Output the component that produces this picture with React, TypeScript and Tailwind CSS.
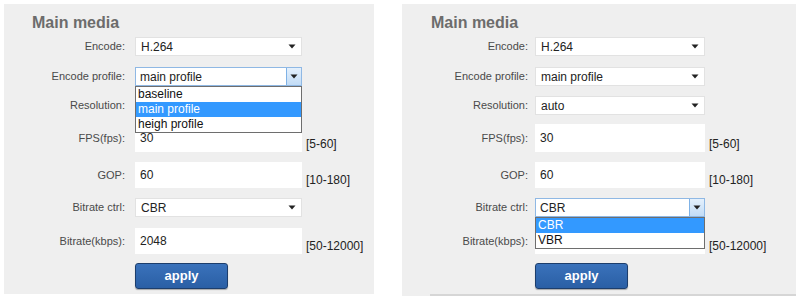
import type { ReactNode } from "react"

type PanelProps = {
  labelW: number
  gap: number
  fieldW: number
  titlePl: string
  openAt: "profile" | "bitrate"
  resolution: string
  bottomLine?: boolean
  className: string
}

const font = { fontFamily: '"Liberation Sans", Arial, sans-serif' }

function Arrow() {
  return (
    <svg width="8" height="5" viewBox="0 0 8 5" aria-hidden="true">
      <path d="M0.5 0.5 H7.5 L4 4.5 Z" fill="#222" />
    </svg>
  )
}

function Select({ value, open, options }: { value: string; open?: boolean; options?: string[] }) {
  return (
    <div className="relative h-full w-full">
      <div
        className={
          open
            ? "flex h-full w-full items-center border border-[#8fb8e4] bg-white pl-[4px] text-[12px] text-[#222]"
            : "flex h-full w-full items-center border border-[#e2e2e2] bg-white pl-[5px] text-[12px] text-[#222]"
        }
      >
        <span className="flex-1">{value}</span>
        {open ? (
          <span className="flex h-full w-[15px] items-center justify-center border-l border-[#7fb2e6] bg-[linear-gradient(#e4f0fc,#c2dcf6)]">
            <Arrow />
          </span>
        ) : (
          <span className="mr-[5px] flex items-center">
            <Arrow />
          </span>
        )}
      </div>
      {open && options && (
        <ul className="absolute left-0 top-full z-10 w-full border border-[#6e6e6e] bg-white text-[12px] leading-[15px] text-[#111]">
          {options.map((o) => (
            <li
              key={o}
              className={o === value ? "bg-[#3399ff] pl-[2px] text-white" : "pl-[2px]"}
            >
              {o}
            </li>
          ))}
        </ul>
      )}
    </div>
  )
}

function Row({
  label,
  labelW,
  gap,
  fieldW,
  h,
  mt,
  hint,
  children,
}: {
  label: string
  labelW: number
  gap: number
  fieldW: number
  h: number
  mt: number
  hint?: string
  children: ReactNode
}) {
  return (
    <div className="flex" style={{ marginTop: mt, height: h }}>
      <div
        className="flex shrink-0 items-center justify-end text-[11px] text-[#4a4a4a]"
        style={{ width: labelW, marginRight: gap }}
      >
        {label}
      </div>
      <div className="shrink-0" style={{ width: fieldW }}>
        {children}
      </div>
      {hint && (
        <div className="mb-[1px] ml-[4px] self-end text-[12px] leading-[14px] text-[#222]">{hint}</div>
      )}
    </div>
  )
}

function Input({ value }: { value: string }) {
  return (
    <div className="flex h-full w-full items-center bg-white pl-[5px] text-[12px] text-[#222]">{value}</div>
  )
}

function Panel({ labelW, gap, fieldW, titlePl, openAt, resolution, bottomLine, className }: PanelProps) {
  const r = { labelW, gap, fieldW }
  return (
    <div className={`flex flex-col bg-[#efefef] pt-[10px] ${className}`}>
      <h2 className={`h-[18px] text-[16px] font-bold leading-[18px] text-[#6c6c6c] ${titlePl}`}>Main media</h2>
      <Row {...r} label="Encode:" h={19} mt={5}>
        <Select value="H.264" />
      </Row>
      <Row {...r} label="Encode profile:" h={19} mt={11}>
        <Select
          value="main profile"
          open={openAt === "profile"}
          options={["baseline", "main profile", "heigh profile"]}
        />
      </Row>
      <Row {...r} label="Resolution:" h={19} mt={10}>
        <Select value={resolution} />
      </Row>
      <Row {...r} label="FPS(fps):" h={28} mt={9} hint="[5-60]">
        <Input value="30" />
      </Row>
      <Row {...r} label="GOP:" h={26} mt={10} hint="[10-180]">
        <Input value="60" />
      </Row>
      <Row {...r} label="Bitrate ctrl:" h={19} mt={10}>
        <Select value="CBR" open={openAt === "bitrate"} options={["CBR", "VBR"]} />
      </Row>
      <Row {...r} label="Bitrate(kbps):" h={26} mt={11} hint="[50-12000]">
        <Input value="2048" />
      </Row>
      <div className="mt-[9px] flex" style={{ paddingLeft: labelW + gap }}>
        <button className="h-[26px] w-[93px] rounded-[3px] border border-[#1d3e6c] bg-[linear-gradient(#3a72bb,#2a5fa5)] text-[13px] font-bold text-white shadow-[0_1px_1px_rgba(0,0,0,0.3)]">
          apply
        </button>
      </div>
      <div className="h-[5px]" />
      {bottomLine && <div className="ml-[28px] h-[2px] bg-[#d6d6d6]" />}
    </div>
  )
}

export default function App() {
  return (
    <div className="h-[301px] w-[801px] bg-white" style={font}>
      <div className="flex pt-[4px]">
        <Panel
          className="ml-[4px] h-[290px] w-[370px]"
          labelW={121}
          gap={10}
          fieldW={167}
          titlePl="pl-[28px]"
          openAt="profile"
          resolution="auto"
        />
        <Panel
          className="ml-[28px] h-[292px] w-[394px]"
          labelW={126}
          gap={7}
          fieldW={170}
          titlePl="pl-[29px]"
          openAt="bitrate"
          resolution="auto"
          bottomLine
        />
      </div>
    </div>
  )
}
